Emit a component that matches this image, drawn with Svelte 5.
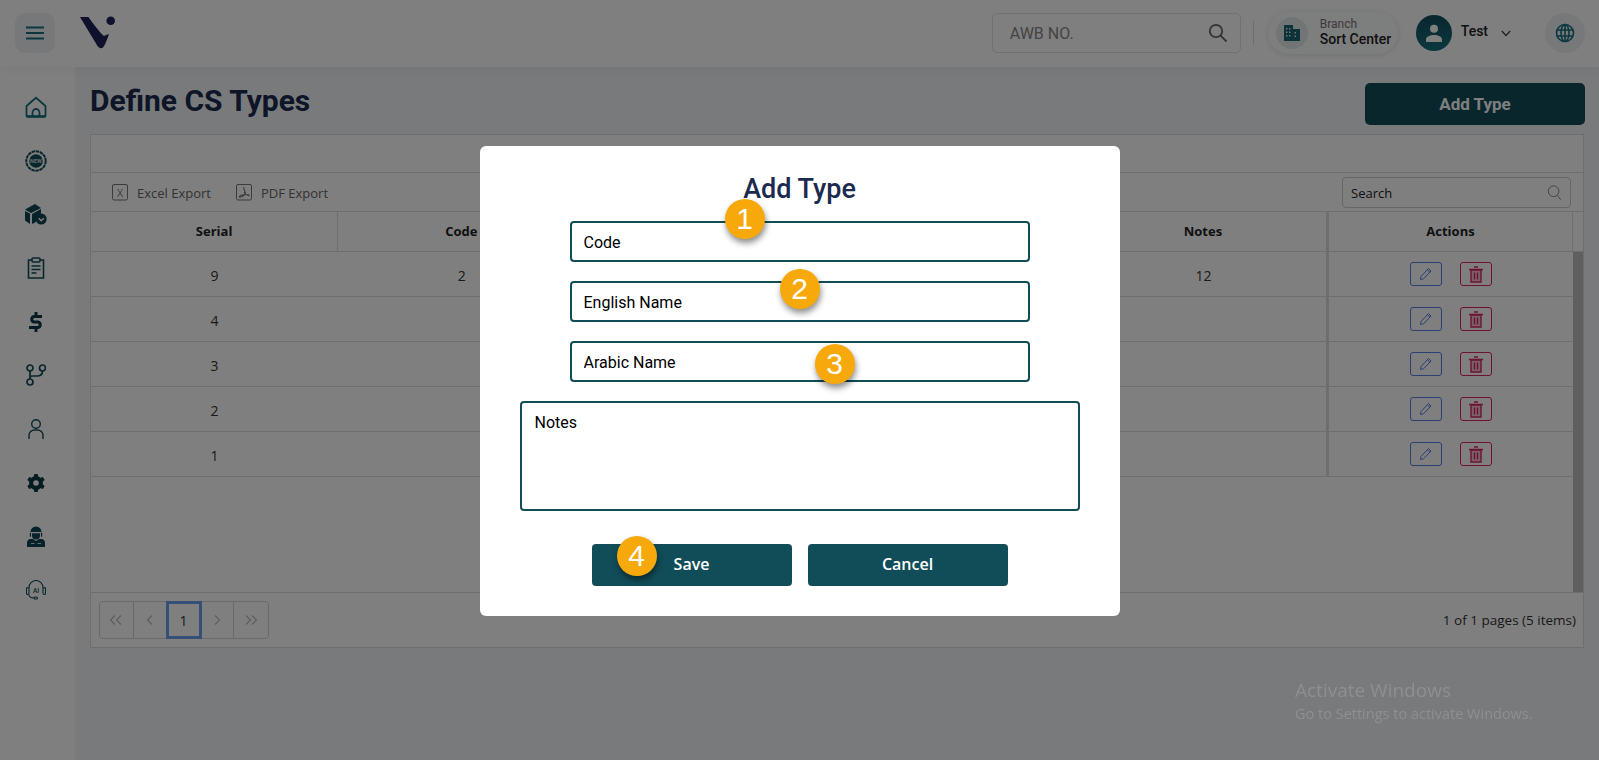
<script>
  const rows = [
    { serial: 9, code: '2', notes: '12' },
    { serial: 4, code: '', notes: '' },
    { serial: 3, code: '', notes: '' },
    { serial: 2, code: '', notes: '' },
    { serial: 1, code: '', notes: '' }
  ];
  const columns = ['Serial', 'Code', 'English Name', 'Arabic Name', 'Notes', 'Actions'];
</script>

<div class="page">
  <header class="topbar">
    <button class="menu-btn" aria-label="Menu">
      <svg width="20" height="14" viewBox="0 0 20 14"><path d="M1 1.500h18M1 7h18M1 12.500h18" stroke="#17707f" stroke-width="2" fill="none" /></svg>
    </button>
    <svg class="logo" width="40" height="38" viewBox="0 0 40 38">
      <path d="M2 3H10.500C14 8 22 19 26 22C28 21 30 20 31 20C29 26 27 31 25 33.500C23 35 21 34 19.500 32Z" fill="#1c2159" />
      <circle cx="32.700" cy="6.700" r="4.300" fill="#1c2159" />
    </svg>

    <div class="top-right">
      <div class="awb">
        <span>AWB NO.</span>
        <svg width="20" height="20" viewBox="0 0 20 20" fill="none" stroke="#666" stroke-width="1.800"><circle cx="8" cy="8" r="6.200" /><path d="M12.600 12.600 18.500 18.500" /></svg>
      </div>
      <div class="sep"></div>
      <div class="branch">
        <span class="branch-ico">
          <svg width="16" height="16" viewBox="0 0 16 16">
            <path d="M0 0h9v4h7v12H0z" fill="#1d6573" />
            <path d="M2 3h1.500v1.500H2zM5 3h1.500v1.500H5zM2 6.500h1.500V8H2zM5 6.500h1.500V8H5zM2 10h1.500v1.500H2zM5 10h1.500v1.500H5zM10.500 7H12v1.500h-1.500zM10.500 10.500H12V12h-1.500z" fill="#dfe8ea" />
          </svg>
        </span>
        <span class="branch-text">
          <small>Branch</small>
          <b>Sort Center</b>
        </span>
      </div>
      <span class="avatar">
        <svg width="16" height="18" viewBox="0 0 16 18" fill="#fff"><circle cx="8" cy="4.800" r="4" /><path d="M0 18v-2.500C0 12.500 4 11 8 11s8 1.500 8 4.500V18z" /></svg>
      </span>
      <span class="user-name">Test</span>
      <svg class="chev" width="10" height="7" viewBox="0 0 10 7" fill="none" stroke="#444" stroke-width="1.300"><path d="M.8 1 5 5.500 9.200 1" /></svg>
      <span class="globe">
        <svg width="20" height="20" viewBox="0 0 20 20" fill="none" stroke="#17707f" stroke-width="1.600">
          <circle cx="10" cy="10" r="8.500" /><ellipse cx="10" cy="10" rx="4" ry="8.500" /><path d="M10 1.500v17M2 7h16M2 13h16" />
        </svg>
      </span>
    </div>
  </header>

  <div class="shell">
    <nav class="sidebar">
      <span class="nav-item">
        <svg width="22" height="22" viewBox="0 0 22 22" fill="none" stroke="#17707f" stroke-width="1.800"><path d="M1.500 10 11 1.800 20.500 10v9.500a1 1 0 0 1-1 1h-17a1 1 0 0 1-1-1z" /><path d="M7.500 20.500v-4a3.500 3.500 0 0 1 7 0v4" /><path d="M1.500 20.500h19" stroke-width="2.400" /></svg>
      </span>
      <span class="nav-item">
        <svg width="22" height="22" viewBox="0 0 22 22">
          <circle cx="11" cy="11" r="9.700" fill="none" stroke="#114d59" stroke-width="2" stroke-dasharray="3.500 .6" />
          <circle cx="11" cy="11" r="6.800" fill="#114d59" />
          <text x="11" y="12.800" text-anchor="middle" font-size="5.500" font-family="Roboto" font-weight="700" fill="#cfdcdf">NEW</text>
        </svg>
      </span>
      <span class="nav-item">
        <svg width="22" height="22" viewBox="0 0 22 22">
          <path d="M0 6.500 10 1l6 4-10 5zM0 8l5 2.500V21L0 17.500zM7 11l9-5v5.500a7 7 0 0 0-5 7.500L7 21z" fill="#0f4450" />
          <circle cx="16.200" cy="16" r="5.500" fill="#0f4450" />
          <path d="M13.700 15.300 16.200 17.800 18.800 15.300" fill="none" stroke="#fff" stroke-width="1.400" />
        </svg>
      </span>
      <span class="nav-item">
        <svg width="18" height="22" viewBox="0 0 18 22" fill="none" stroke="#114d59" stroke-width="1.600"><path d="M5 3H1.500v18h15V3H13" /><rect x="5" y="1" width="8" height="4" rx="1" /><path d="M4.500 9h9M4.500 12.500h9M4.500 16h5" /></svg>
      </span>
      <span class="nav-item">
        <svg width="14" height="22" viewBox="0 0 14 22" fill="none" stroke="#0a3a45" stroke-width="3"><path d="M13 5.500H5a2.800 2.800 0 0 0 0 5.500h4a2.800 2.800 0 0 1 0 5.500H0" /><path d="M7 1v4M7 17v4" /></svg>
      </span>
      <span class="nav-item">
        <svg width="20" height="22" viewBox="0 0 20 22" fill="none" stroke="#114d59" stroke-width="1.700"><circle cx="4" cy="4" r="3" /><circle cx="16.500" cy="4" r="3" /><circle cx="4" cy="18" r="3" /><path d="M4 7v8M16.500 7c0 4-2 5-5.500 5H6a2 2 0 0 0-2 2" /></svg>
      </span>
      <span class="nav-item">
        <svg width="16" height="20" viewBox="0 0 16 20" fill="none" stroke="#114d59" stroke-width="1.400"><circle cx="8" cy="5" r="4.300" /><path d="M1 20v-3.500a5.500 5.500 0 0 1 5.500-5.500h3a5.500 5.500 0 0 1 5.500 5.500V20" /></svg>
      </span>
      <span class="nav-item">
        <svg width="18" height="18" viewBox="0 0 18 18"><g fill="#0a3a45"><rect x="7" y="0" width="4" height="18" rx="1" /><rect x="7" y="0" width="4" height="18" rx="1" transform="rotate(60 9 9)" /><rect x="7" y="0" width="4" height="18" rx="1" transform="rotate(120 9 9)" /><circle cx="9" cy="9" r="7" /></g><circle cx="9" cy="9" r="2.800" fill="#fff" /></svg>
      </span>
      <span class="nav-item">
        <svg width="18" height="21" viewBox="0 0 18 21" fill="#0f4450">
          <path d="M3.500 6a5.500 5.500 0 0 1 11 0z" />
          <path d="M5 7.200h8V9.500a4 4 0 0 1-8 0z" />
          <path d="M2.800 6.800h1.200v4H2.800zM14 6.800h1.200v4H14z" />
          <path d="M0 21v-4a4 4 0 0 1 4-4h2l3 2 3-2h2a4 4 0 0 1 4 4v4z" />
          <path d="M4 17.500h3.500M10.500 17.500H14" stroke="#fff" stroke-width=".8" />
        </svg>
      </span>
      <span class="nav-item">
        <svg width="20" height="20" viewBox="0 0 20 20" fill="none" stroke="#114d59" stroke-width="1.100">
          <path d="M3 8.500V7.500a7 7 0 0 1 14 0v1M3 14.500c0 2.500 2 3.500 5 3.500" />
          <rect x=".5" y="7.500" width="2.500" height="7" rx="1.200" /><rect x="17" y="7.500" width="2.500" height="7" rx="1.200" /><rect x="8" y="17" width="3.500" height="2" rx="1" />
          <text x="10" y="12.500" text-anchor="middle" font-size="6.500" font-family="Roboto" font-weight="500" fill="#114d59" stroke="none">AI</text>
        </svg>
      </span>
    </nav>

    <main class="content">
      <div class="title-row">
        <h1>Define CS Types</h1>
        <button class="add-btn">Add Type</button>
      </div>

      <section class="card">
        <div class="group-bar"></div>
        <div class="toolbar">
          <span class="tool">
            <svg width="17" height="17" viewBox="0 0 17 17" fill="none" stroke="#777"><rect x=".5" y=".5" width="15" height="15.500" rx="1.500" /><text x="8" y="12.500" text-anchor="middle" font-size="10.500" font-family="Open Sans" fill="#777" stroke="none">X</text></svg>
            Excel Export
          </span>
          <span class="tool">
            <svg width="17" height="17" viewBox="0 0 17 17" fill="none" stroke="#777"><rect x=".5" y=".5" width="15" height="15.500" rx="1.500" /><path d="M8 3c-1 2 1.500 5 1.500 6.500S5 13.800 3.500 13 9 9.500 13 11c.5 1.500-3 .5-5-3" stroke-width="1.100" /></svg>
            PDF Export
          </span>
          <div class="tb-search">
            <span>Search</span>
            <svg width="15" height="16" viewBox="0 0 16 18" fill="none" stroke="#888" stroke-width="1.100"><circle cx="7" cy="7" r="6" /><path d="M11 11.500 15 16.500" /></svg>
          </div>
        </div>

        <div class="head-row">
          <div class="grid">
            {#each columns as col, i}
              <div class="th" class:act-col={i === 5}>{col}</div>
            {/each}
          </div>
          <div class="gutter"></div>
        </div>

        <div class="tbody">
          <div class="row-list">
            {#each rows as row}
              <div class="grid tr">
                <div class="td">{row.serial}</div>
                <div class="td">{row.code}</div>
                <div class="td"></div>
                <div class="td"></div>
                <div class="td">{row.notes}</div>
                <div class="td actions">
                  <span class="act edit">
                    <svg width="14" height="14" viewBox="0 0 14 14" fill="none" stroke="#5b7de8"><path d="M1.500 12.500 2 9.500 9.500 1.500 12 4 4.500 11.800z" /><path d="M8.500 2.800 10.800 5.200" /></svg>
                  </span>
                  <span class="act del">
                    <svg width="14" height="17" viewBox="0 0 14 17" fill="#f4c4d0" stroke="#e0245e" stroke-width="1.400"><path d="M2 4h10v12H2z" /><path d="M0 3.500h14M5 1h4M5.500 6.500v7M8.500 6.500v7" fill="none" /></svg>
                  </span>
                </div>
              </div>
            {/each}
          </div>
          <div class="scroll"></div>
        </div>

        <footer class="pager-row">
          <div class="pager">
            <span class="pg"><svg width="14" height="10" viewBox="0 0 14 10" fill="none" stroke="#bbb" stroke-width="1.200"><path d="M6 .5 1.500 5 6 9.500M12 .5 7.500 5 12 9.500" /></svg></span>
            <span class="pg"><svg width="8" height="10" viewBox="0 0 8 10" fill="none" stroke="#bbb" stroke-width="1.200"><path d="M6 .5 1.500 5 6 9.500" /></svg></span>
            <span class="pg active">1</span>
            <span class="pg"><svg width="8" height="10" viewBox="0 0 8 10" fill="none" stroke="#bbb" stroke-width="1.200"><path d="M2 .5 6.500 5 2 9.500" /></svg></span>
            <span class="pg"><svg width="14" height="10" viewBox="0 0 14 10" fill="none" stroke="#bbb" stroke-width="1.200"><path d="M2 .5 6.500 5 2 9.500M8 .5 12.500 5 8 9.500" /></svg></span>
          </div>
          <span class="pg-info">1 of 1 pages (5 items)</span>
        </footer>
      </section>
    </main>
  </div>

  <div class="overlay">
    <div class="modal">
      <h2>Add Type</h2>
      <div class="field">
        <input placeholder="Code" />
        <span class="bubble b1">1</span>
      </div>
      <div class="field">
        <input placeholder="English Name" />
        <span class="bubble b2">2</span>
      </div>
      <div class="field">
        <input placeholder="Arabic Name" />
        <span class="bubble b3">3</span>
      </div>
      <textarea placeholder="Notes"></textarea>
      <div class="buttons">
        <div class="field-btn">
          <button class="btn">Save</button>
          <span class="bubble b4">4</span>
        </div>
        <button class="btn">Cancel</button>
      </div>
    </div>
  </div>

  <div class="activate">
    <div class="a1">Activate Windows</div>
    <div class="a2">Go to Settings to activate Windows.</div>
  </div>
</div>

<style>
:global(body) {
  margin: 0;
  overflow: hidden;
}
.page {
  height: 760px;
  background: #f2f4f8;
  font-family: "Open Sans", sans-serif;
  color: #222;
  display: flex;
  flex-direction: column;
}
.topbar {
  height: 67px;
  flex: none;
  background: #fff;
  display: flex;
  align-items: center;
  padding: 0 14px 1px 15px;
  box-sizing: border-box;
  box-shadow: 0 2px 12px rgba(0, 0, 0, 0.05);
  position: relative;
  font-family: Roboto, sans-serif;
}
.menu-btn {
  width: 40px;
  height: 40px;
  border: none;
  border-radius: 10px;
  background: #edf1f3;
  display: flex;
  align-items: center;
  justify-content: center;
  padding: 0;
}
.logo {
  margin-left: 23px;
}
.top-right {
  margin-left: auto;
  display: flex;
  align-items: center;
}
.awb {
  width: 249px;
  height: 40px;
  box-sizing: border-box;
  border: 1px solid #e2e2e2;
  border-radius: 5px;
  display: flex;
  align-items: center;
  justify-content: space-between;
  padding: 0 12px 0 17px;
  color: #888;
  font-size: 16px;
}
.sep {
  width: 1px;
  height: 24px;
  background: #ddd;
  margin: 0 14px 0 12px;
}
.branch {
  width: 130px;
  height: 42px;
  box-sizing: border-box;
  border-radius: 21px;
  background: #fbfcfc;
  box-shadow: 0 1px 6px rgba(0, 0, 0, 0.12);
  display: flex;
  align-items: center;
  padding-left: 8px;
}
.branch-ico {
  width: 32px;
  height: 32px;
  border-radius: 50%;
  background: #e4ebec;
  display: flex;
  align-items: center;
  justify-content: center;
}
.branch-text {
  display: flex;
  flex-direction: column;
  margin: -2px 0 0 12px;
  line-height: 15px;
}
.branch-text small {
  font-size: 12px;
  color: #777;
}
.branch-text b {
  font-size: 14px;
  font-weight: 500;
  color: #222;
}
.avatar {
  width: 36px;
  height: 36px;
  border-radius: 50%;
  background: linear-gradient(#114d59, #17707f);
  display: flex;
  align-items: center;
  justify-content: center;
  margin-left: 18px;
}
.user-name {
  margin: -4px 0 0 9px;
  font-size: 14px;
  font-weight: 500;
}
.chev {
  margin-left: 13px;
  margin-right: 34px;
}
.globe {
  width: 40px;
  height: 40px;
  border-radius: 50%;
  background: #edf1f3;
  display: flex;
  align-items: center;
  justify-content: center;
}
.shell {
  flex: 1;
  display: flex;
  min-height: 0;
}
.sidebar {
  width: 75px;
  flex: none;
  background: #fff;
  box-sizing: border-box;
  padding-top: 13px;
  display: flex;
  flex-direction: column;
  align-items: center;
}
.nav-item {
  height: 53.7px;
  display: flex;
  align-items: center;
  justify-content: center;
  margin-left: -3px;
}
.content {
  flex: 1;
  min-width: 0;
  padding: 16px 15px 0;
}
.title-row {
  display: flex;
  align-items: center;
  justify-content: space-between;
  height: 42px;
}
h1 {
  margin: 0 0 8px;
  font: 700 30px Roboto, sans-serif;
  color: #1b2a4e;
}
.add-btn {
  width: 220px;
  height: 42px;
  border: none;
  border-radius: 5px;
  background: #114d59;
  color: #fff;
  font: 700 17px Roboto, sans-serif;
  margin-right: -1px;
}
.card {
  margin-top: 9px;
  height: 514px;
  box-sizing: border-box;
  border: 1px solid #dcdcdc;
  background: #fff;
  display: flex;
  flex-direction: column;
  font-size: 13px;
}
.group-bar {
  height: 37px;
  flex: none;
  border-bottom: 1px solid #dcdcdc;
}
.toolbar {
  height: 39px;
  flex: none;
  box-sizing: border-box;
  border-bottom: 1px solid #dcdcdc;
  display: flex;
  align-items: center;
  padding: 1px 12px 0 21px;
  color: #666;
}
.tool {
  display: flex;
  align-items: center;
  gap: 8px;
  margin-right: 25px;
}
.tb-search {
  margin-left: auto;
  width: 229px;
  height: 31px;
  box-sizing: border-box;
  border: 1px solid #ccc;
  border-radius: 4px;
  display: flex;
  align-items: center;
  justify-content: space-between;
  padding: 0 8px;
  color: #222;
}
.head-row {
  height: 40px;
  flex: none;
  box-sizing: border-box;
  border-bottom: 1px solid #dcdcdc;
  display: flex;
}
.grid {
  flex: 1;
  display: grid;
  grid-template-columns: repeat(5, 1fr) 246px;
}
.th {
  display: flex;
  align-items: center;
  justify-content: center;
  padding-bottom: 1px;
  font-weight: 700;
  color: #222;
  border-right: 1px solid #dcdcdc;
}
.th.act-col,
.td.actions {
  border-left: 3px solid #dcdcdc;
  margin-left: -1px;
}
.gutter {
  width: 10px;
  flex: none;
}
.tbody {
  flex: 1;
  display: flex;
  min-height: 0;
}
.row-list {
  flex: 1;
}
.tr {
  height: 45px;
  box-sizing: border-box;
  border-bottom: 1px solid #dcdcdc;
}
.td {
  display: flex;
  align-items: center;
  justify-content: center;
  padding-top: 2px;
  color: #333;
  font-size: 14px;
}
.actions {
  gap: 18px;
  padding: 0;
}
.act {
  width: 32px;
  height: 24px;
  box-sizing: border-box;
  border: 1px solid;
  border-radius: 3px;
  display: flex;
  align-items: center;
  justify-content: center;
}
.edit {
  border-color: #5b7de8;
}
.del {
  border-color: #e0245e;
}
.scroll {
  width: 10px;
  flex: none;
  background: #bfbfbf;
}
.pager-row {
  height: 55px;
  flex: none;
  box-sizing: border-box;
  border-top: 1px solid #dcdcdc;
  display: flex;
  align-items: center;
  justify-content: space-between;
  padding: 0 7px 0 8px;
}
.pager {
  display: flex;
  height: 38px;
  box-sizing: border-box;
  border: 1px solid #d4d4d4;
  border-radius: 4px;
}
.pg {
  width: 33.6px;
  box-sizing: border-box;
  display: flex;
  align-items: center;
  justify-content: center;
  border-right: 1px solid #d4d4d4;
  color: #333;
  font-size: 14px;
}
.pg:last-child {
  border-right: none;
}
.pg.active {
  outline: 3px solid #6a9ff0;
  outline-offset: -2px;
}
.pg-info {
  font-size: 13.5px;
  color: #333;
}
.overlay {
  position: fixed;
  inset: 0;
  background: rgba(0, 0, 0, 0.5);
  display: flex;
  justify-content: center;
  align-items: flex-start;
  padding-top: 146px;
  box-sizing: border-box;
}
.modal {
  width: 640px;
  box-sizing: border-box;
  background: #fff;
  border-radius: 6px;
  padding: 27px 0 30px;
  display: flex;
  flex-direction: column;
  align-items: center;
}
h2 {
  margin: 0 0 15px;
  font: 500 27px/33px Roboto, sans-serif;
  color: #1b2a4e;
}
.field {
  position: relative;
  width: 460px;
  margin-bottom: 19px;
}
input,
textarea {
  display: block;
  box-sizing: border-box;
  border: 2px solid #114d59;
  border-radius: 4px;
  font: 400 16px Roboto, sans-serif;
  outline: none;
  background: #fff;
}
input {
  width: 100%;
  height: 41px;
  padding: 2px 12px 0;
}
textarea {
  width: 560px;
  height: 110px;
  padding: 10px 13px;
  resize: none;
}
input::placeholder,
textarea::placeholder {
  color: #000;
  opacity: 1;
}
.buttons {
  display: flex;
  gap: 16px;
  margin-top: 33px;
}
.field-btn {
  position: relative;
}
.btn {
  display: block;
  width: 200px;
  height: 42px;
  border: none;
  border-radius: 4px;
  background: #114d59;
  color: #fff;
  font: 600 16px "Open Sans", sans-serif;
  padding: 0 0 2px;
}
.bubble {
  position: absolute;
  width: 40px;
  height: 40px;
  border-radius: 50%;
  background: #f7a90b;
  color: #fff;
  box-shadow: 1px 4px 6px rgba(0, 0, 0, 0.45);
  display: flex;
  align-items: center;
  justify-content: center;
  font: 400 30px "Liberation Sans", sans-serif;
}
.b1 {
  left: 155px;
  top: -22px;
}
.b2 {
  left: 210px;
  top: -12px;
}
.b3 {
  left: 245px;
  top: 3px;
}
.b4 {
  left: 25px;
  top: -8px;
}
.activate {
  position: fixed;
  left: 1295px;
  top: 678px;
  color: #8e8f91;
  pointer-events: none;
}
.a1 {
  font-size: 19px;
  line-height: 24px;
}
.a2 {
  font-size: 14.5px;
  line-height: 23px;
}
</style>
